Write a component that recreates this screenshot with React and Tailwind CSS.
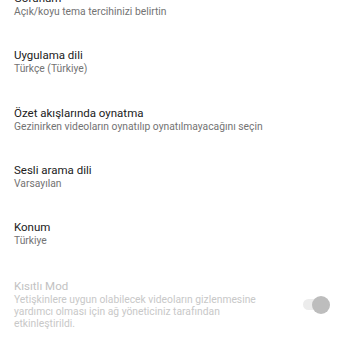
import React from 'react';

const rows = [
  { title: 'Görünüm', sub: 'Açık/koyu tema tercihinizi belirtin' },
  { title: 'Uygulama dili', sub: 'Türkçe (Türkiye)' },
  { title: 'Özet akışlarında oynatma', sub: 'Gezinirken videoların oynatılıp oynatılmayacağını seçin' },
  { title: 'Sesli arama dili', sub: 'Varsayılan' },
  { title: 'Konum', sub: 'Türkiye' },
];

function SettingRow({ title, sub }) {
  return (
    <div className="h-[57.3px] pl-[14px]">
      <p className="text-[11.5px] leading-[13px] text-[#212121]">{title}</p>
      <p className="text-[10.3px] leading-[11.5px] text-[#737373] mt-[1px]">{sub}</p>
    </div>
  );
}

export default function App() {
  return (
    <div className="w-[350px] h-[350px] overflow-hidden bg-white" style={{ fontFamily: 'Roboto, sans-serif' }}>
      <div className="-mt-[8px]">
        {rows.map((r) => (
          <SettingRow key={r.title} title={r.title} sub={r.sub} />
        ))}
        {/* Restricted mode - disabled by admin */}
        <div className="flex items-center justify-between pl-[14px] pr-[20px] pt-[1.5px]">
          <div className="w-[265px]">
            <p className="text-[11.5px] leading-[13px] text-[#c2c2c2]">Kısıtlı Mod</p>
            <p className="text-[10.3px] leading-[11.7px] text-[#c8c8c8] mt-[1.5px]">
              Yetişkinlere uygun olabilecek videoların gizlenmesine yardımcı olması için ağ yöneticiniz tarafından etkinleştirildi.
            </p>
          </div>
          <div className="relative w-[27px] h-[18px] flex items-center">
            <div className="w-[25px] h-[11px] rounded-full bg-[#ececec]" />
            <div className="absolute right-0 top-0 w-[18px] h-[18px] rounded-full bg-[#bdbdbd]" />
          </div>
        </div>
      </div>
    </div>
  );
}
